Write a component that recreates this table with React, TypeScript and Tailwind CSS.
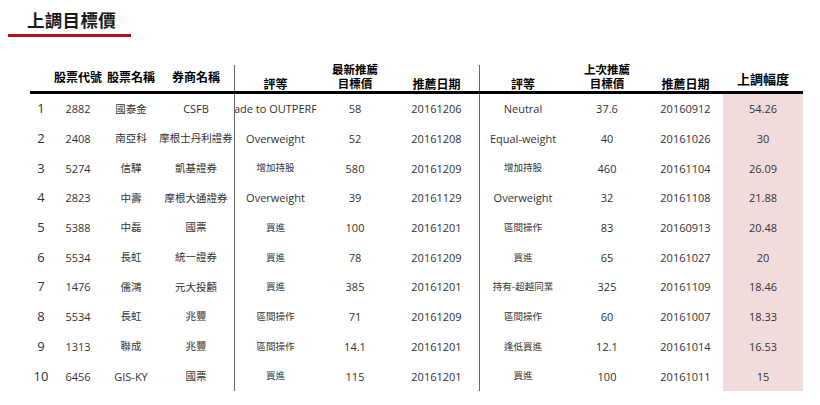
import React from "react";

const rows = [
  ["1", "2882", "國泰金", "CSFB", "Upgrade to OUTPERFORM", "58", "20161206", "Neutral", "37.6", "20160912", "54.26"],
  ["2", "2408", "南亞科", "摩根士丹利證券", "Overweight", "52", "20161208", "Equal-weight", "40", "20161026", "30"],
  ["3", "5274", "信驊", "凱基證券", "增加持股", "580", "20161209", "增加持股", "460", "20161104", "26.09"],
  ["4", "2823", "中壽", "摩根大通證券", "Overweight", "39", "20161129", "Overweight", "32", "20161108", "21.88"],
  ["5", "5388", "中磊", "國票", "買進", "100", "20161201", "區間操作", "83", "20160913", "20.48"],
  ["6", "5534", "長虹", "統一證券", "買進", "78", "20161209", "買進", "65", "20161027", "20"],
  ["7", "1476", "儒鴻", "元大投顧", "買進", "385", "20161201", "持有-超越同業", "325", "20161109", "18.46"],
  ["8", "5534", "長虹", "兆豐", "區間操作", "71", "20161209", "區間操作", "60", "20161007", "18.33"],
  ["9", "1313", "聯成", "兆豐", "區間操作", "14.1", "20161201", "逢低買進", "12.1", "20161014", "16.53"],
  ["10", "6456", "GIS-KY", "國票", "買進", "115", "20161201", "買進", "100", "20161011", "15"],
];

const isCJK = (s: string) => /[\u4e00-\u9fff]/.test(s);

const gridCols =
  "grid grid-cols-[22px_52px_54px_76px_82px_78px_85px_87px_82px_75px_80px]";

export default function App() {
  return (
    <div
      className="w-[820px] h-[405px] bg-white relative overflow-hidden text-[#333]"
      style={{ fontFamily: '"Open Sans", "Noto Sans CJK TC", sans-serif' }}
    >
      {/* Title */}
      <div className="pt-[9px] pl-[27px] h-[34px]">
        <div
          className="text-[17.5px] font-bold leading-[22px] text-[#1a1a1a] tracking-[0.3px]"
          style={{ fontFamily: '"Noto Sans CJK TC", sans-serif' }}
        >
          上調目標價
        </div>
      </div>
      <div className="ml-[8px] w-[123px] h-[3px] bg-[#b01515]" />

      {/* Table */}
      <div className="ml-[30px] mt-[26px] w-[773px]">
        {/* Header */}
        <div
          className={`${gridCols} h-[31px] border-b-[3px] border-black text-black font-bold`}
          style={{ fontFamily: '"Noto Sans CJK TC", sans-serif' }}
        >
          <div />
          <div className="flex items-end justify-center pb-[7px] text-[12px] leading-[14px] whitespace-nowrap">股票代號</div>
          <div className="flex items-end justify-center pb-[7px] text-[12px] leading-[14px] whitespace-nowrap">股票名稱</div>
          <div className="flex items-end justify-center pb-[7px] text-[12px] leading-[14px] whitespace-nowrap">券商名稱</div>
          <div className="flex items-end justify-center pb-0 text-[12px] leading-[14px] border-l border-[#666] mt-[2px]">評等</div>
          <div className="flex flex-col items-center justify-end pb-[1px] text-[11.5px] leading-[13.5px] gap-0">
            <span className="block">最新推薦</span>
            <span className="block">目標價</span>
          </div>
          <div className="flex items-end justify-center pb-0 text-[12px] leading-[14px]">推薦日期</div>
          <div className="flex items-end justify-center pb-0 text-[12px] leading-[14px] border-l border-[#666] mt-[2px]">評等</div>
          <div className="flex flex-col items-center justify-end pb-[1px] text-[11.5px] leading-[13.5px] gap-0">
            <span className="block">上次推薦</span>
            <span className="block">目標價</span>
          </div>
          <div className="flex items-end justify-center pb-0 text-[12px] leading-[14px]">推薦日期</div>
          <div className="flex items-end justify-center pb-[5px] text-[13px] leading-[14px]">上調幅度</div>
        </div>

        {/* Rows */}
        {rows.map((r, i) => (
          <div key={i} className={`${gridCols} h-[29.7px]`}>
            {r.map((c, j) => {
              const cjk = isCJK(c);
              let size = "text-[11px]";
              if (j === 0) size = "text-[13px]";
              else if (cjk && (j === 4 || j === 7)) size = "text-[9.5px]";
              else if (cjk) size = "text-[10.5px]";
              const border = j === 4 || j === 7 ? "border-l border-[#666]" : "";
              const bg = j === 10 ? "bg-[#f2dcdb]" : "";
              return (
                <div
                  key={j}
                  className={`flex items-center justify-center whitespace-nowrap overflow-hidden leading-none ${size} ${border} ${bg}`}
                  style={
                    cjk
                      ? { fontFamily: '"Noto Sans CJK TC", sans-serif' }
                      : undefined
                  }
                >
                  {c}
                </div>
              );
            })}
          </div>
        ))}
      </div>
    </div>
  );
}
